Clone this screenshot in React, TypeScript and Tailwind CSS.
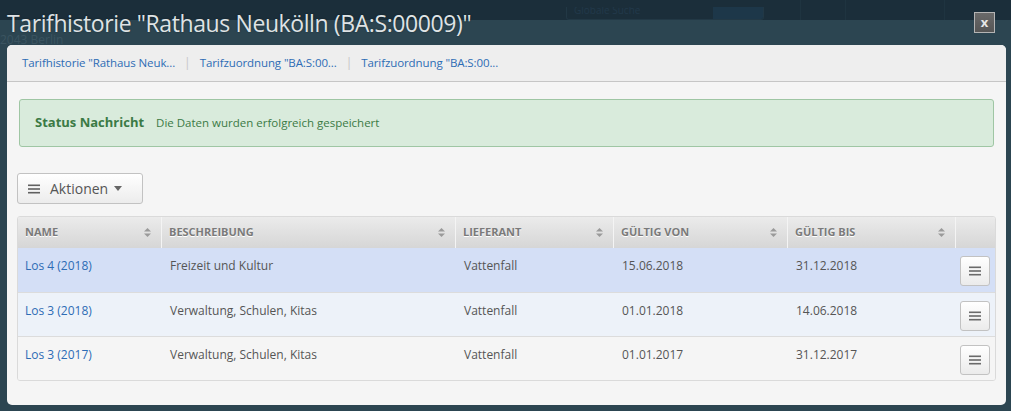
import { ReactNode } from 'react';

interface Row {
  name: string;
  desc: string;
  supplier: string;
  from: string;
  to: string;
  bg: string;
}

const rows: Row[] = [
  { name: 'Los 4 (2018)', desc: 'Freizeit und Kultur', supplier: 'Vattenfall', from: '15.06.2018', to: '31.12.2018', bg: 'bg-[#d4dff6]' },
  { name: 'Los 3 (2018)', desc: 'Verwaltung, Schulen, Kitas', supplier: 'Vattenfall', from: '01.01.2018', to: '14.06.2018', bg: 'bg-[#edf2f9]' },
  { name: 'Los 3 (2017)', desc: 'Verwaltung, Schulen, Kitas', supplier: 'Vattenfall', from: '01.01.2017', to: '31.12.2017', bg: 'bg-[#f5f5f5]' },
];

const columns = [
  { label: 'Name', width: 'w-[144px]' },
  { label: 'Beschreibung', width: 'w-[294px]' },
  { label: 'Lieferant', width: 'w-[158px]' },
  { label: 'Gültig von', width: 'w-[174px]' },
  { label: 'Gültig bis', width: 'w-[168px]' },
];

function SortIcon() {
  return (
    <svg width="7" height="9" viewBox="0 0 7 9" className="shrink-0">
      <path d="M3.5 0 L7 3.5 H0 Z" fill="#9a9a9a" />
      <path d="M3.5 9 L7 5.5 H0 Z" fill="#9a9a9a" />
    </svg>
  );
}

function Bars({ color = '#666' }: { color?: string }) {
  return (
    <svg width="12" height="10" viewBox="0 0 12 10">
      <rect x="0" y="0.5" width="12" height="1.6" fill={color} />
      <rect x="0" y="4.2" width="12" height="1.6" fill={color} />
      <rect x="0" y="7.9" width="12" height="1.6" fill={color} />
    </svg>
  );
}

function Crumb({ children, last }: { children: ReactNode; last?: boolean }) {
  return (
    <div className="flex items-center">
      <span className="text-[11.5px] tracking-[-0.1px] text-[#2d6cb5]">{children}</span>
      {!last && <span className="mx-[9px] text-[12px] text-[#c6c6c6]">|</span>}
    </div>
  );
}

export default function App() {
  return (
    <div className="relative h-[411px] w-full overflow-hidden bg-[#2c4551] font-['Open_Sans',sans-serif]">
      {/* dimmed page behind the dialog */}
      <div className="flex h-[20px] items-end bg-[#1b2e3a]">
        <div className="ml-[566px] flex h-[13px] w-[198px] overflow-hidden rounded-b-[3px] border border-t-0 border-[#223845]">
          <span className="pl-[7px] text-[10px] leading-[6px] text-[#22394a]">Globale Suche</span>
          <div className="ml-auto w-[50px] bg-[#1d3749]" />
        </div>
        <div className="ml-[36px] h-[20px] border-l border-[#1f3440]" />
        <div className="ml-[44px] h-[20px] border-l border-[#1f3440]" />
        <div className="ml-[98px] h-[20px] border-l border-[#1f3440]" />
      </div>
      <div className="pt-[14px] text-[12px] leading-[11px] text-[#3b5460]">2043 Berlin</div>

      {/* dialog */}
      <div className="absolute inset-0 flex flex-col pl-[7px] pr-[5px]">
        <div className="flex h-[45px] items-start justify-between">
          <h1 className="mt-[12px] text-[23px] leading-[22px] tracking-[-0.4px] text-[#dfe3e5] [text-shadow:0_0_2px_rgba(0,0,0,0.35)]">
            Tarifhistorie "Rathaus Neukölln (BA:S:00009)"
          </h1>
          <button className="mr-[11px] mt-[12px] flex h-[21px] w-[21px] items-center justify-center border border-[#b4b4b4] bg-gradient-to-b from-[#6a6a6a] to-[#555] text-[13px] font-bold leading-none text-[#e6e6e6]">
            x
          </button>
        </div>

        <div className="h-[360px] overflow-hidden rounded-[5px] bg-[#f5f5f5]">
          <div className="flex h-[37px] items-center border-b border-[#c6c6c6] bg-[#eeeeee] pl-[15px]">
            <Crumb>Tarifhistorie "Rathaus Neuk...</Crumb>
            <Crumb>Tarifzuordnung "BA:S:00...</Crumb>
            <Crumb last>Tarifzuordnung "BA:S:00...</Crumb>
          </div>

          <div className="px-[10px] pt-[17px]">
            <div className="mx-[2px] flex h-[48px] items-center rounded-[3px] border border-[#9fc6a4] bg-[#d9ebdc] pl-[15px]">
              <span className="text-[13px] font-bold text-[#3b7a45]">Status Nachricht</span>
              <span className="ml-[12px] text-[11.5px] text-[#3b7a45]">Die Daten wurden erfolgreich gespeichert</span>
            </div>

            <button className="mt-[26px] flex h-[31px] w-[126px] items-center rounded-[3px] border border-[#c2c2c2] bg-gradient-to-b from-[#ffffff] to-[#ececec] pl-[10px] text-[14px] text-[#555]">
              <Bars color="#606060" />
              <span className="ml-[10px]">Aktionen</span>
              <svg width="8" height="5" viewBox="0 0 8 5" className="ml-[6px]">
                <path d="M0 0 H8 L4 5 Z" fill="#666" />
              </svg>
            </button>

            <div className="mt-[12px] w-[979px] overflow-hidden rounded-[3px] border border-[#dadada]">
              <div className="flex h-[31px] bg-gradient-to-b from-[#ebebeb] to-[#d6d6d6]">
                {columns.map((c) => (
                  <div
                    key={c.label}
                    className={`${c.width} flex items-center justify-between border-r border-[#f4f4f4] pl-[7px] pr-[10px]`}
                  >
                    <span className="text-[11px] font-bold uppercase text-[#7a7a7a] [text-shadow:0_1px_0_#fff]">{c.label}</span>
                    <SortIcon />
                  </div>
                ))}
                <div className="flex-1" />
              </div>
              {rows.map((r, i) => (
                <div key={i} className={`flex h-[44px] ${r.bg} ${i > 0 ? 'border-t border-[#dcdcdc]' : ''}`}>
                  <div className="w-[144px] pl-[7px] pt-[9px] text-[12px] text-[#2d6cb5]">{r.name}</div>
                  <div className="w-[294px] pl-[8px] pt-[9px] text-[12px] text-[#555]">{r.desc}</div>
                  <div className="w-[158px] pl-[8px] pt-[9px] text-[12px] text-[#555]">{r.supplier}</div>
                  <div className="w-[174px] pl-[8px] pt-[9px] text-[12px] text-[#555]">{r.from}</div>
                  <div className="w-[168px] pl-[8px] pt-[9px] text-[12px] text-[#555]">{r.to}</div>
                  <div className="flex flex-1 items-start justify-end pr-[5px] pt-[8px]">
                    <button className="flex h-[30px] w-[30px] items-center justify-center rounded-[3px] border border-[#c2c2c2] bg-gradient-to-b from-[#ffffff] to-[#ebebeb]">
                      <Bars color="#6a6a6a" />
                    </button>
                  </div>
                </div>
              ))}
            </div>
          </div>
        </div>
      </div>
    </div>
  );
}
